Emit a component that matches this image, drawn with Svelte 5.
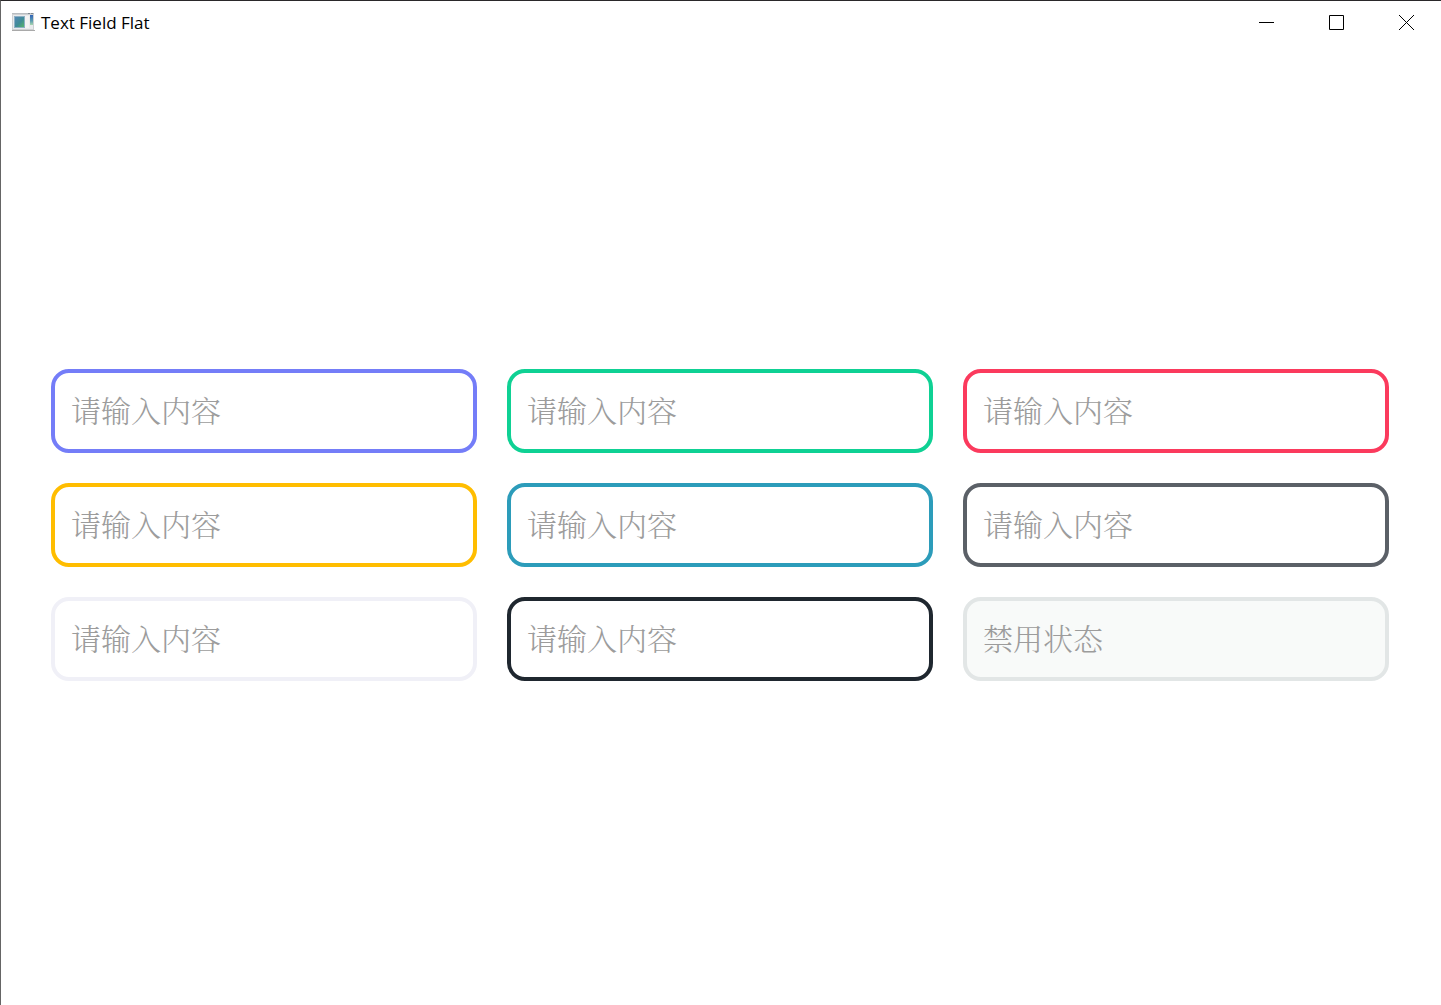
<script>
  const fields = [
    { tone: 'indigo', hint: '请输入内容' },
    { tone: 'green', hint: '请输入内容' },
    { tone: 'red', hint: '请输入内容' },
    { tone: 'amber', hint: '请输入内容' },
    { tone: 'blue', hint: '请输入内容' },
    { tone: 'slate', hint: '请输入内容' },
    { tone: 'light', hint: '请输入内容' },
    { tone: 'dark', hint: '请输入内容' },
    { tone: 'off', hint: '禁用状态', disabled: true }
  ];
</script>

<div class="window">
  <header>
    <svg class="logo" width="24" height="20" viewBox="0 0 24 20" aria-hidden="true">
      <defs>
        <linearGradient id="pane" x1="0" y1="0" x2="1" y2="1">
          <stop offset="0" stop-color="#5287b4" />
          <stop offset=".55" stop-color="#3f8c96" />
          <stop offset="1" stop-color="#58b668" />
        </linearGradient>
        <linearGradient id="strip" x1="0" y1="0" x2="0" y2="1">
          <stop offset="0" stop-color="#2f62b8" />
          <stop offset=".6" stop-color="#5f9fb0" />
          <stop offset="1" stop-color="#a8d6ae" />
        </linearGradient>
      </defs>
      <rect x="0" y="1" width="22" height="18" fill="#cfd1d3" />
      <rect x="1" y="3" width="20" height="14" fill="#e9ebed" />
      <rect x="0" y="1" width="22" height="1" fill="#b9bdc1" />
      <rect x="16" y="1" width="2" height="1" fill="#7f8890" />
      <rect x="19" y="1" width="2" height="1" fill="#7f8890" />
      <rect x="0" y="18" width="23" height="1" fill="#a9a9a9" />
      <rect x="2" y="4" width="11" height="12" fill="#8db0c4" />
      <rect x="3" y="5" width="9" height="10" fill="url(#pane)" />
      <rect x="13" y="4" width="4" height="12" fill="#f3f3f3" />
      <rect x="18" y="3" width="3" height="10" fill="url(#strip)" />
    </svg>
    <h1>Text Field Flat</h1>
    <div class="controls">
      <button type="button" aria-label="Minimize">
        <svg width="15" height="15" viewBox="0 0 15 15"><path d="M0 7.5H15" /></svg>
      </button>
      <button type="button" aria-label="Maximize">
        <svg width="15" height="15" viewBox="0 0 15 15"><path d="M.5 .5H14.5V14.5H.5Z" /></svg>
      </button>
      <button type="button" aria-label="Close">
        <svg width="15" height="15" viewBox="0 0 15 15"><path d="M0 0L15 15M15 0L0 15" /></svg>
      </button>
    </div>
  </header>

  <main>
    {#each fields as field}
      <input
        class={field.tone}
        type="text"
        placeholder={field.hint}
        aria-label={field.hint}
        disabled={field.disabled}
      />
    {/each}
  </main>
</div>

<style>
  :global(body) {
    background: #fff;
  }

  .window {
    box-sizing: border-box;
    min-height: 100vh;
    display: flex;
    flex-direction: column;
    border-top: 1px solid #2a282a;
    border-left: 1px solid #656565;
    background: #fff;
  }

  header {
    display: flex;
    align-items: center;
    height: 44px;
    padding-left: 11px;
  }

  .logo {
    flex: none;
    margin-bottom: 2px;
  }

  h1 {
    margin: 0 0 0 5px;
    font: 400 17px/24px 'Open Sans', 'Noto Sans', sans-serif;
    color: #000;
  }

  .controls {
    display: flex;
    align-self: stretch;
    margin-left: auto;
    padding-bottom: 1px;
  }

  .controls button {
    display: flex;
    align-items: center;
    justify-content: center;
    width: 70px;
    padding: 0;
    border: 0;
    background: none;
  }

  .controls path {
    fill: none;
    stroke: #000;
    stroke-width: 1;
  }

  main {
    flex: 1;
    display: grid;
    grid-template-columns: repeat(3, minmax(0, 1fr));
    align-content: center;
    gap: 30px;
    padding: 0 52px 0 50px;
  }

  input {
    box-sizing: border-box;
    width: 100%;
    height: 84px;
    padding: 0 16px 4px;
    border: 4px solid;
    border-radius: 18px;
    background: #fff;
    color: #222;
    font: 300 30px/40px 'Noto Serif CJK SC', 'Noto Sans CJK SC', serif;
    outline: none;
  }

  input::placeholder {
    color: #9c9c9c;
    opacity: 1;
  }

  .indigo { border-color: #747df8; }
  .green { border-color: #0fd194; }
  .red { border-color: #fb3a5d; }
  .amber { border-color: #ffbd00; }
  .blue { border-color: #2c9cba; }
  .slate { border-color: #5b6067; }
  .light { border-color: #f0f0f7; }
  .dark { border-color: #1f272f; }
  .off {
    border-color: #e2e6e6;
    background: #f8faf9;
  }
</style>
